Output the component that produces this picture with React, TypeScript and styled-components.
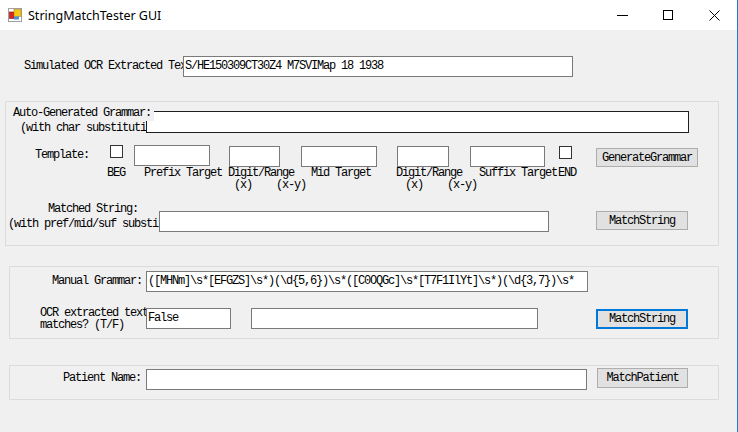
import React from 'react';
import styled, { createGlobalStyle } from 'styled-components';

const GlobalStyle = createGlobalStyle`
  html, body {
    margin: 0;
    padding: 0;
    overflow: hidden;
    background: #f0f0f0;
  }
  * {
    box-sizing: border-box;
  }
`;

const FONT = `'Liberation Mono', 'DejaVu Sans Mono', monospace`;

const Window = styled.div`
  width: 738px;
  height: 432px;
  display: flex;
  flex-direction: column;
  border-right: 1px solid #1a7fd4;
  background: #f0f0f0;
  font-family: ${FONT};
  font-size: 12px;
  letter-spacing: -1.2px;
  color: #000;
`;

const TitleBar = styled.div`
  height: 30px;
  background: #fff;
  display: flex;
  align-items: center;
  flex-shrink: 0;
`;

const AppIcon = styled.svg`
  margin-left: 8px;
  width: 14px;
  height: 14px;
`;

const Title = styled.span`
  margin-left: 6px;
  font-family: 'Noto Sans', 'Open Sans', sans-serif;
  font-size: 12.5px;
  letter-spacing: 0;
  flex: 1;
`;

const CtlButton = styled.div`
  width: 46px;
  height: 30px;
  display: flex;
  align-items: center;
  justify-content: center;
`;

const Client = styled.div`
  flex: 1;
  display: flex;
  flex-direction: column;
  overflow: hidden;
`;

const Row = styled.div<{ $mt?: number; $ml?: number }>`
  display: flex;
  align-items: flex-start;
  margin-top: ${p => p.$mt ?? 0}px;
  padding-left: ${p => p.$ml ?? 0}px;
  flex-shrink: 0;
`;

const Group = styled.div<{ $mt: number; $ml: number; $w: number; $h: number }>`
  margin-top: ${p => p.$mt}px;
  margin-left: ${p => p.$ml}px;
  width: ${p => p.$w}px;
  height: ${p => p.$h}px;
  border: 1px solid #dcdcdc;
  display: flex;
  flex-direction: column;
  flex-shrink: 0;
`;

const Label = styled.div<{ $w: number; $pl?: number; $lh?: number }>`
  width: ${p => p.$w}px;
  padding-left: ${p => p.$pl ?? 0}px;
  line-height: ${p => p.$lh ?? 21}px;
  white-space: nowrap;
  overflow: hidden;
  flex-shrink: 0;
`;

const LabelStack = styled.div<{ $w: number; $mt?: number }>`
  width: ${p => p.$w}px;
  margin-top: ${p => p.$mt ?? 0}px;
  display: flex;
  flex-direction: column;
  flex-shrink: 0;
`;

const Line = styled.div<{ $pl: number; $lh: number }>`
  padding-left: ${p => p.$pl}px;
  line-height: ${p => p.$lh}px;
  height: ${p => p.$lh}px;
  white-space: nowrap;
  overflow: hidden;
`;

/* label text that runs past its column and is drawn over the box corner */
const OverLine = styled.div<{ $pl: number; $lh: number }>`
  margin-left: ${p => p.$pl}px;
  line-height: ${p => p.$lh}px;
  height: ${p => p.$lh}px;
  white-space: nowrap;
  align-self: flex-start;
  background: #f0f0f0;
  padding-right: 3px;
  position: relative;
  z-index: 1;
`;

const TextBox = styled.div<{ $w: number; $h?: number; $ml?: number; $mt?: number; $dark?: boolean }>`
  width: ${p => p.$w}px;
  height: ${p => p.$h ?? 21}px;
  margin-left: ${p => p.$ml ?? 0}px;
  margin-top: ${p => p.$mt ?? 0}px;
  border: 1px solid ${p => (p.$dark ? '#1e1e1e' : '#7a7a7a')};
  background: #fff;
  padding-left: 1px;
  line-height: 19px;
  white-space: nowrap;
  overflow: hidden;
  flex-shrink: 0;
`;

const CheckBox = styled.div<{ $ml?: number; $mt?: number }>`
  width: 13px;
  height: 13px;
  margin-left: ${p => p.$ml ?? 0}px;
  margin-top: ${p => p.$mt ?? 0}px;
  border: 1px solid #333;
  background: #fff;
  flex-shrink: 0;
`;

const Button = styled.div<{ $w: number; $h: number; $ml: number; $mt?: number; $focused?: boolean }>`
  width: ${p => p.$w}px;
  height: ${p => p.$h}px;
  margin-left: ${p => p.$ml}px;
  margin-top: ${p => p.$mt ?? 0}px;
  background: #e1e1e1;
  border: ${p => (p.$focused ? '2px solid #0078d7' : '1px solid #adadad')};
  display: flex;
  align-items: center;
  justify-content: center;
  white-space: nowrap;
  flex-shrink: 0;
`;

const CaptionRow = styled.div`
  display: flex;
  padding-left: 101px;
  height: 24px;
  flex-shrink: 0;
`;

const Caption = styled.div<{ $w: number }>`
  width: ${p => p.$w}px;
  line-height: 12px;
  white-space: nowrap;
  flex-shrink: 0;
`;

const SubCaptions = styled.div<{ $a: number; $b: number }>`
  display: flex;
  padding-left: ${p => p.$a}px;
  & > span + span {
    margin-left: ${p => p.$b}px;
  }
`;

const MANUAL = String.raw`([MHNm]\s*[EFGZS]\s*)(\d{5,6})\s*([C0OQGc]\s*[T7F1IlYt]\s*)(\d{3,7})\s*`;

export default function App() {
  return (
    <>
      <GlobalStyle />
      <Window>
        <TitleBar>
          <AppIcon viewBox="0 0 14 14">
            <rect x="0.5" y="0.5" width="13" height="13" fill="#fff" stroke="#a0a0a0" />
            <rect x="1.5" y="4" width="4.5" height="6.5" fill="#d22" stroke="#8a1010" strokeWidth="0.6" />
            <rect x="6" y="1.5" width="7" height="7" fill="#f5c518" stroke="#b08a10" strokeWidth="0.6" />
            <rect x="6" y="8.5" width="5" height="3" fill="#4a8fe0" />
          </AppIcon>
          <Title>StringMatchTester GUI</Title>
          <CtlButton>
            <svg width="12" height="12" viewBox="0 0 12 12">
              <line x1="1" y1="6.5" x2="12" y2="6.5" stroke="#000" strokeWidth="1" />
            </svg>
          </CtlButton>
          <CtlButton>
            <svg width="10" height="10" viewBox="0 0 10 10">
              <rect x="0.5" y="0.5" width="9" height="9" fill="none" stroke="#000" strokeWidth="1" />
            </svg>
          </CtlButton>
          <CtlButton>
            <svg width="11" height="11" viewBox="0 0 11 11">
              <path d="M0.5 0.5 L10.5 10.5 M10.5 0.5 L0.5 10.5" stroke="#000" strokeWidth="1" />
            </svg>
          </CtlButton>
        </TitleBar>

        <Client>
          <Row $mt={26} $ml={24}>
            <Label $w={159}>Simulated OCR Extracted Text:</Label>
            <TextBox $w={390}>S/HE150309CT30Z4 M7SVIMap 18 1938</TextBox>
          </Row>

          <Group $mt={24} $ml={5} $w={714} $h={145}>
            <Row $mt={4}>
              <LabelStack $w={140}>
                <OverLine $pl={7} $lh={15}>Auto-Generated Grammar:</OverLine>
                <Line $pl={14} $lh={15}>(with char substitution)</Line>
              </LabelStack>
              <TextBox $w={543} $h={22} $mt={5} $dark />
            </Row>

            <Row $mt={9}>
              <Label $w={104} $pl={29}>Template:</Label>
              <CheckBox />
              <TextBox $w={76} $ml={11} />
              <TextBox $w={51} $ml={19} $mt={1} />
              <TextBox $w={76} $ml={21} $mt={1} />
              <TextBox $w={52} $ml={20} $mt={1} />
              <TextBox $w={75} $ml={21} $mt={1} />
              <CheckBox $ml={14} $mt={1} />
              <Button $w={102} $h={19} $ml={24} $mt={3}>GenerateGrammar</Button>
            </Row>

            <CaptionRow>
              <Caption $w={37}>BEG</Caption>
              <Caption $w={84}>Prefix Target</Caption>
              <Caption $w={83}>
                Digit/Range
                <SubCaptions $a={6} $b={24}>
                  <span>(x)</span>
                  <span>(x-y)</span>
                </SubCaptions>
              </Caption>
              <Caption $w={85}>Mid Target</Caption>
              <Caption $w={83}>
                Digit/Range
                <SubCaptions $a={9} $b={24}>
                  <span>(x)</span>
                  <span>(x-y)</span>
                </SubCaptions>
              </Caption>
              <Caption $w={79}>Suffix Target</Caption>
              <Caption $w={30}>END</Caption>
            </CaptionRow>

            <Row $mt={11}>
              <LabelStack $w={153}>
                <Line $pl={42} $lh={15}>Matched String:</Line>
                <Line $pl={2} $lh={15}>(with pref/mid/suf substitution)</Line>
              </LabelStack>
              <TextBox $w={390} $mt={9} />
              <Button $w={92} $h={19} $ml={47} $mt={9}>MatchString</Button>
            </Row>
          </Group>

          <Group $mt={20} $ml={9} $w={710} $h={73}>
            <Row $mt={4}>
              <Label $w={136} $pl={42}>Manual Grammar:</Label>
              <TextBox $w={442}>{MANUAL}</TextBox>
            </Row>
            <Row $mt={15}>
              <LabelStack $w={136}>
                <Line $pl={30} $lh={12}>OCR extracted text</Line>
                <Line $pl={30} $lh={12}>matches? (T/F)</Line>
              </LabelStack>
              <TextBox $w={85} $mt={1}>False</TextBox>
              <TextBox $w={287} $ml={20} $mt={1} />
              <Button $w={92} $h={20} $ml={58} $mt={2} $focused>MatchString</Button>
            </Row>
          </Group>

          <Group $mt={26} $ml={9} $w={710} $h={35}>
            <Row $mt={2}>
              <Label $w={136} $pl={53}>Patient Name:</Label>
              <TextBox $w={441} $mt={1} />
              <Button $w={91} $h={20} $ml={10}>MatchPatient</Button>
            </Row>
          </Group>
        </Client>
      </Window>
    </>
  );
}
